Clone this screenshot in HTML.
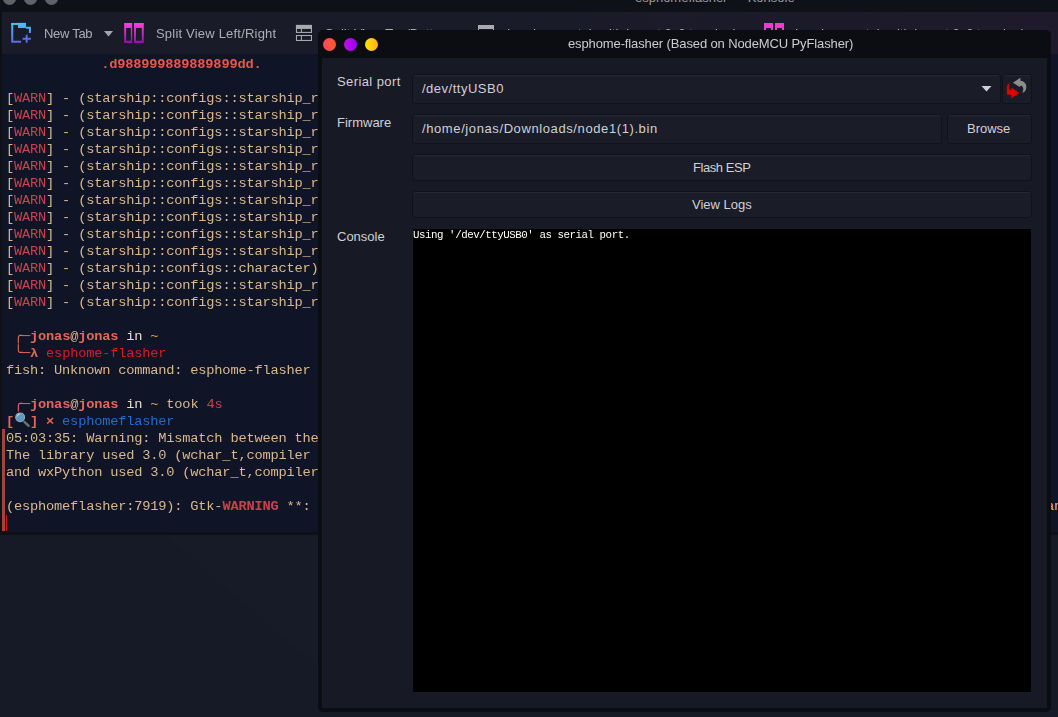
<!DOCTYPE html>
<html><head><meta charset="utf-8">
<style>
*{margin:0;padding:0;box-sizing:border-box}
html,body{width:1058px;height:717px;overflow:hidden;background:#161a26;position:relative;font-family:"Liberation Sans",sans-serif}
.abs{position:absolute}
/* konsole */
#ktitle{left:0;top:0;width:1058px;height:12px;background:#0f1118}
.kdot{position:absolute;top:-8px;width:13px;height:13px;border-radius:50%;background:#606269}
#ktitletext{left:627px;top:-10px;font-size:13px;letter-spacing:0px;color:#9a9ba2;white-space:nowrap}
#ktool{left:0;top:12px;width:1058px;height:42px;background:linear-gradient(90deg,#191b28 0%,#1a1b28 50%,#1e1a2b 100%)}
#kleft{left:0;top:12px;width:2px;height:523px;background:#0e1016}
#kterm{left:2px;top:54px;width:1056px;height:478px;background:#0f1427}
#kbottom{left:0;top:532px;width:1058px;height:3px;background:#0e1016}
.tb{position:absolute;top:26px;font-size:13px;color:#adaeb3;white-space:nowrap;will-change:transform}
#term{will-change:transform;left:5.8px;top:55.5px;font-family:"Liberation Mono",monospace;font-size:13.7px;letter-spacing:-0.2px;line-height:17px;color:#dbb98e;white-space:pre}
.r{color:#c8434c}
.co{color:#e5665a;font-weight:bold}
.cn{color:#e5665a}
.tan{color:#dbb98e}
.lt{color:#e8dccb}
.yl{color:#e8a33a}
.rd{color:#e01b1b}
.bl{color:#1d6fd6}
/* flasher window */
#win{left:318px;top:30px;width:733px;height:682px;background:#0c0d12;border-radius:5px}
#wtitle{will-change:transform;left:568px;top:30px;height:28px;letter-spacing:-0.12px;white-space:nowrap;font-size:13px;line-height:28px;color:#cbccd1}
.tl{position:absolute;top:38px;width:13px;height:13px;border-radius:50%}
#client{left:322px;top:58px;width:725px;height:650px;background:#171a25}
.lbl{position:absolute;left:337px;font-size:13px;color:#d0d1d6;white-space:nowrap}
.fld{position:absolute;background:#1a1c28;border:1px solid #10121a;border-radius:3px;box-shadow:inset 0 1px 0 #262935}
.btxt{position:absolute;font-size:13px;color:#d0d1d6;white-space:nowrap}
#console{left:413px;top:229px;width:618px;height:463px;background:#000}
#ctext{will-change:transform;left:413px;top:228.3px;font-family:"Liberation Mono",monospace;font-size:10.8px;letter-spacing:-0.46px;line-height:14px;color:#fff;white-space:pre}
</style></head><body>
<div id="ktitle" class="abs">
  <div class="kdot" style="left:3px"></div>
  <div class="kdot" style="left:24px"></div>
  <div class="kdot" style="left:45px"></div>
</div>
<div id="ktitletext" class="abs">· esphomeflasher — Konsole</div>
<svg class="abs" style="left:0;top:535px" width="320" height="182"><polygon points="165,0 320,0 320,135" fill="#171b27"/></svg>
<div id="ktool" class="abs"></div>
<div id="kleft" class="abs"></div>
<div id="kterm" class="abs"></div>
<div id="kbottom" class="abs"></div>

<!-- toolbar -->
<svg class="abs" style="left:5px;top:16px" width="40" height="32" viewBox="0 0 896 717">
  <defs><linearGradient id="g1" x1="0" y1="150" x2="0" y2="610" gradientUnits="userSpaceOnUse"><stop offset="0" stop-color="#44c6f0"/><stop offset="1" stop-color="#5a68ee"/></linearGradient></defs>
  <path d="M162 155 V578 H360" fill="none" stroke="url(#g1)" stroke-width="45"/>
  <path d="M140 178 H470" fill="none" stroke="url(#g1)" stroke-width="45"/>
  <rect x="290" y="155" width="180" height="115" fill="url(#g1)"/>
  <path d="M470 262 H558 V380" fill="none" stroke="url(#g1)" stroke-width="45"/>
  <path d="M485 420 V600 M395 510 H580" fill="none" stroke="#5a70f0" stroke-width="42"/>
</svg>
<div class="tb" style="left:44px;letter-spacing:-0.3px">New Tab</div>
<svg class="abs" style="left:104px;top:31px" width="10" height="6"><path d="M0 0H9L4.5 5.5Z" fill="#a5a6ab"/></svg>
<svg class="abs" style="left:115px;top:16px" width="40" height="32" viewBox="0 0 896 717">
  <defs><linearGradient id="g2" x1="0" y1="155" x2="0" y2="605" gradientUnits="userSpaceOnUse"><stop offset="0" stop-color="#ff3ee0"/><stop offset="1" stop-color="#8e10a8"/></linearGradient></defs>
  <path fill="url(#g2)" fill-rule="evenodd" d="M205 155H385V605H205Z M250 270V555H355V270Z"/>
  <path fill="url(#g2)" fill-rule="evenodd" d="M425 155H645V605H425Z M470 270V555H600V270Z"/>
</svg>
<div class="tb" style="left:156px;letter-spacing:0.2px">Split View Left/Right</div>
<svg class="abs" style="left:285px;top:16px" width="40" height="32" viewBox="0 0 896 717">
  <g fill="none" stroke="#a9a9af" stroke-width="24">
   <rect x="257" y="212" width="336" height="156"/>
   <rect x="257" y="437" width="336" height="111"/>
   <path d="M367 280V368 M367 437V548"/>
  </g>
  <rect x="245" y="200" width="360" height="90" fill="#a9a9af"/>
</svg>
<div class="tb" style="left:325px">Split View Top/Bottom</div>
<svg class="abs" style="left:478px;top:25px" width="17" height="17"><rect x="0" y="0" width="16" height="4" fill="#a9a9af"/><rect x="0.5" y="0.5" width="15" height="15" fill="none" stroke="#a9a9af"/></svg>
<div class="tb" style="left:507px">Load a new tab with layout 2x2 terminals</div>
<svg class="abs" style="left:764px;top:23px" width="20" height="20">
  <path fill="#f038d8" fill-rule="evenodd" d="M0 0H9V20H0Z M2 5V18H7V5Z"/>
  <path fill="#f038d8" fill-rule="evenodd" d="M11 0H20V20H11Z M13 5V18H18V5Z"/>
</svg>
<div class="tb" style="left:795px">Load a new tab with layout 2x2 terminals</div>

<!-- terminal text -->
<div id="term" class="abs">            <span class="cn" style="font-weight:bold;color:#e8584a;position:relative;left:-1px">.d988999889889899dd.</span>

[<span class="r">WARN</span>] - (starship::configs::starship_r
[<span class="r">WARN</span>] - (starship::configs::starship_r
[<span class="r">WARN</span>] - (starship::configs::starship_r
[<span class="r">WARN</span>] - (starship::configs::starship_r
[<span class="r">WARN</span>] - (starship::configs::starship_r
[<span class="r">WARN</span>] - (starship::configs::starship_r
[<span class="r">WARN</span>] - (starship::configs::starship_r
[<span class="r">WARN</span>] - (starship::configs::starship_r
[<span class="r">WARN</span>] - (starship::configs::starship_r
[<span class="r">WARN</span>] - (starship::configs::starship_r
[<span class="r">WARN</span>] - (starship::configs::character)
[<span class="r">WARN</span>] - (starship::configs::starship_r
[<span class="r">WARN</span>] - (starship::configs::starship_r

 <span class="cn">╭─</span><span class="co">jonas</span><span class="tan">@</span><span class="co">jonas</span><span class="lt"> in </span><span class="yl">~</span>
 <span class="cn">╰─</span><span class="co">λ</span> <span class="rd">esphome-flasher</span>
fish: Unknown command: esphome-flasher

 <span class="cn">╭─</span><span class="co">jonas</span><span class="tan">@</span><span class="co">jonas</span><span class="lt"> in </span><span class="yl">~</span> took <span class="r">4s</span>
<span class="co">[  ] ×</span> <span class="bl">esphomeflasher</span>
05:03:35: Warning: Mismatch between the
The library used 3.0 (wchar_t,compiler
and wxPython used 3.0 (wchar_t,compiler

(esphomeflasher:7919): Gtk-<span class="r" style="font-weight:bold">WARNING</span> **:
</div>
<svg class="abs" style="left:0px;top:408px" width="60" height="24" viewBox="0 0 1058 423">
  <path d="M430 245 L505 315" stroke="#6b7174" stroke-width="42" stroke-linecap="round"/>
  <circle cx="355" cy="165" r="78" fill="#5b9bc9" stroke="#a3aab0" stroke-width="18"/>
  <path d="M300 150 Q310 110 350 105" stroke="#d0e4f0" stroke-width="16" fill="none"/>
</svg>
<div class="abs" style="left:2px;top:429px;width:3px;height:102px;background:#a34242"></div>
<div class="abs" style="left:6px;top:515px;width:1px;height:16px;background:#e01010"></div>
<div class="abs" style="left:1046px;top:497.5px;font-family:'Liberation Mono',monospace;font-size:13.7px;letter-spacing:-0.22px;line-height:17px;color:#d8b890;white-space:pre">an</div>

<!-- flasher window -->
<div id="win" class="abs"></div>
<div id="wtitle" class="abs">esphome-flasher (Based on NodeMCU PyFlasher)</div>
<div class="tl" style="left:323px;background:linear-gradient(90deg,#ff4a5a,#ff5a28)"></div>
<div class="tl" style="left:344px;background:linear-gradient(90deg,#c010e0,#9a00ff)"></div>
<div class="tl" style="left:365px;background:linear-gradient(90deg,#ffe600,#ffb020)"></div>
<div id="client" class="abs"></div>

<div class="lbl" style="top:74px;letter-spacing:0.4px">Serial port</div>
<div class="fld" style="left:412px;top:74px;width:589px;height:30px"></div>
<div class="btxt" style="left:422px;top:81px;letter-spacing:0.5px">/dev/ttyUSB0</div>
<svg class="abs" style="left:981px;top:86px" width="11" height="7"><path d="M0.5 0H10.5L5.5 5.5Z" fill="#cdd0d8"/></svg>
<div class="fld" style="left:1002px;top:74px;width:30px;height:30px"></div>
<svg class="abs" style="left:996px;top:70px" width="40" height="38" viewBox="0 0 755 717">
  <path fill="#8c8c8c" d="M320 240 L460 145 L462 205 C540 215 578 262 572 335 C566 395 535 420 495 432 C525 385 522 325 488 300 C472 292 455 300 450 322 Z"/>
  <path fill="#e00000" d="M440 435 L290 330 L290 380 C252 378 232 335 262 248 C222 258 205 295 205 335 L205 460 C232 472 262 470 290 466 L290 532 Z"/>
</svg>

<div class="lbl" style="top:115px">Firmware</div>
<div class="fld" style="left:412px;top:114px;width:530px;height:30px"></div>
<div class="btxt" style="left:422px;top:121px;letter-spacing:0.6px">/home/jonas/Downloads/node1(1).bin</div>
<div class="fld" style="left:947px;top:114px;width:85px;height:30px"></div>
<div class="btxt" style="left:967px;top:121px">Browse</div>

<div class="fld" style="left:412px;top:154px;width:620px;height:27px"></div>
<div class="btxt" style="left:693px;top:160px;letter-spacing:-0.45px">Flash ESP</div>
<div class="fld" style="left:412px;top:191px;width:620px;height:27px"></div>
<div class="btxt" style="left:692px;top:197px">View Logs</div>

<div class="lbl" style="top:229px">Console</div>
<div id="console" class="abs"></div>
<div id="ctext" class="abs">Using '/dev/ttyUSB0' as serial port.</div>
</body></html>
